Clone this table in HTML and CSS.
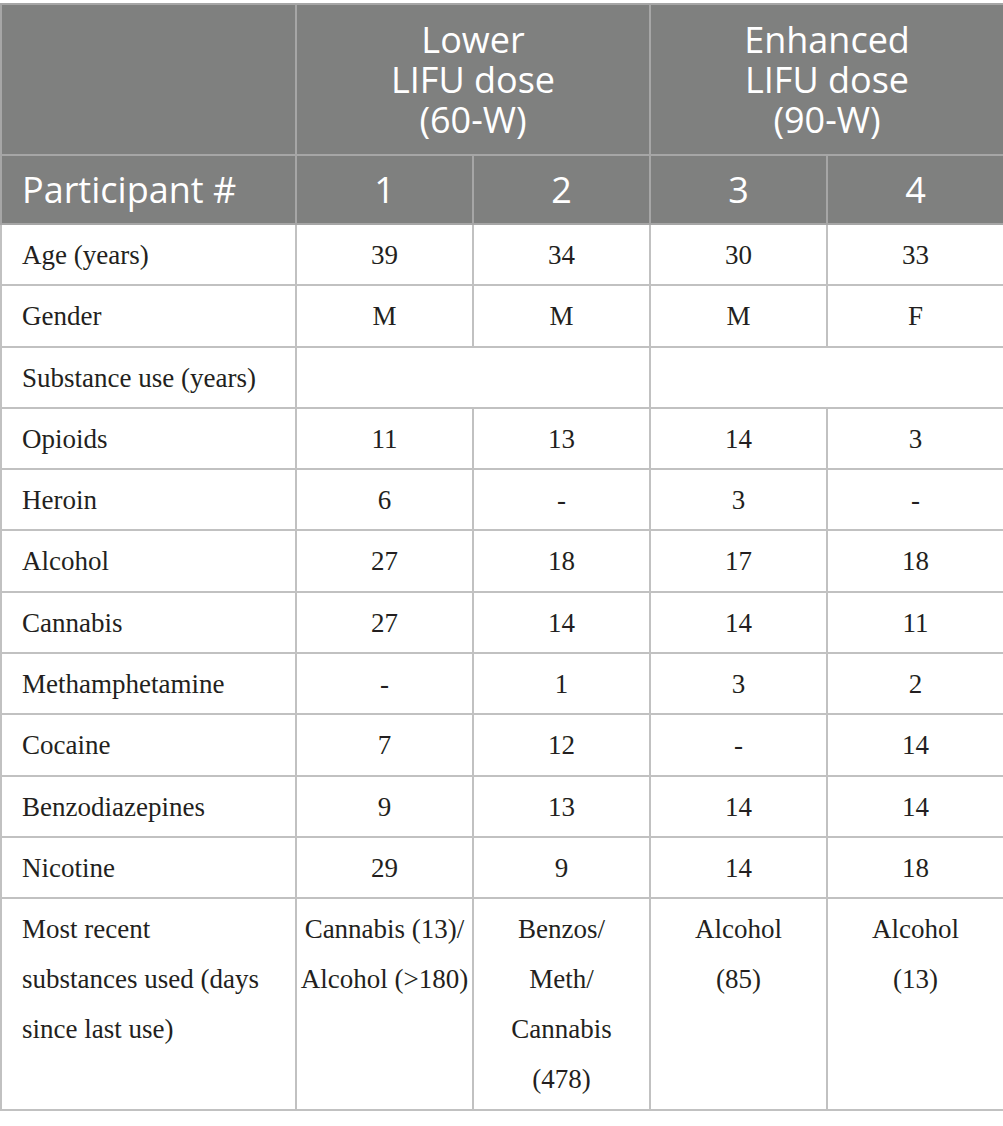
FILE: index.html
```html
<!DOCTYPE html>
<html lang="en">
<head>
<meta charset="UTF-8">
<title>Participant characteristics</title>
<link rel="stylesheet" href="styles.css">
</head>
<body>
  <table class="data-table">
    <colgroup>
      <col class="col-label">
      <col class="col-num">
      <col class="col-num">
      <col class="col-num">
      <col class="col-num">
    </colgroup>
    <thead>
      <tr class="group-row">
        <th></th>
        <th colspan="2">Lower<br>LIFU dose<br>(60-W)</th>
        <th colspan="2">Enhanced<br>LIFU dose<br>(90-W)</th>
      </tr>
      <tr class="id-row">
        <th class="label">Participant #</th>
        <th>1</th>
        <th>2</th>
        <th>3</th>
        <th>4</th>
      </tr>
    </thead>
    <tbody>
      <tr><td class="label">Age (years)</td><td>39</td><td>34</td><td>30</td><td>33</td></tr>
      <tr><td class="label">Gender</td><td>M</td><td>M</td><td>M</td><td>F</td></tr>
      <tr><td class="label">Substance use (years)</td><td colspan="2"></td><td colspan="2"></td></tr>
      <tr><td class="label">Opioids</td><td>11</td><td>13</td><td>14</td><td>3</td></tr>
      <tr><td class="label">Heroin</td><td>6</td><td>-</td><td>3</td><td>-</td></tr>
      <tr><td class="label">Alcohol</td><td>27</td><td>18</td><td>17</td><td>18</td></tr>
      <tr><td class="label">Cannabis</td><td>27</td><td>14</td><td>14</td><td>11</td></tr>
      <tr><td class="label">Methamphetamine</td><td>-</td><td>1</td><td>3</td><td>2</td></tr>
      <tr><td class="label">Cocaine</td><td>7</td><td>12</td><td>-</td><td>14</td></tr>
      <tr><td class="label">Benzodiazepines</td><td>9</td><td>13</td><td>14</td><td>14</td></tr>
      <tr><td class="label">Nicotine</td><td>29</td><td>9</td><td>14</td><td>18</td></tr>
      <tr class="tall-row">
        <td class="label">Most recent<br>substances used (days<br>since last use)</td>
        <td>Cannabis (13)/ Alcohol (&gt;180)</td>
        <td>Benzos/<br>Meth/<br>Cannabis<br>(478)</td>
        <td>Alcohol<br>(85)</td>
        <td>Alcohol<br>(13)</td>
      </tr>
    </tbody>
  </table>
</body>
</html>
```

FILE: styles.css
```css
body {
  margin: 0;
  padding-top: 3px;
  background: #fff;
}
.data-table {
  width: 1003px;
  border-collapse: collapse;
  table-layout: fixed;
}
.col-label {
  width: 295px;
}
.col-num {
  width: 177px;
}
.data-table th {
  background-color: #7f807f;
  color: #fff;
  font-family: "Open Sans", sans-serif;
  font-weight: 400;
  font-size: 36px;
  text-align: center;
  line-height: 40px;
  border: 2px solid #a6a6a6;
}
.group-row th {
  padding: 15px 0 14px;
}
.id-row th {
  padding: 14px 0 13px;
}
.data-table th.label {
  text-align: left;
  padding-left: 20px;
}
.data-table td {
  font-family: "Liberation Serif", serif;
  font-size: 27px;
  color: #231f20;
  text-align: center;
  vertical-align: top;
  line-height: 50px;
  padding: 5px 2px 4.3px;
  border: 2px solid #c1c1c1;
}
.data-table td.label {
  text-align: left;
  padding-left: 20px;
}
```
